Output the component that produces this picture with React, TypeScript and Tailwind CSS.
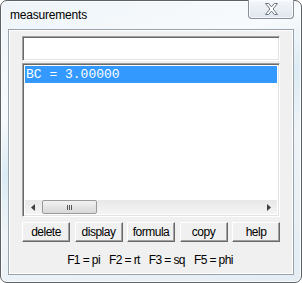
import React from "react";

const sans = { fontFamily: '"Liberation Sans", Arial, sans-serif' } as const;

function Btn({ label }: { label: string }) {
  return (
    <div className="w-[48px] h-[20px] bg-[#f0f0f0] border border-t-white border-l-white border-r-[#696969] border-b-[#696969] shadow-[inset_-1px_-1px_0_#a0a0a0] flex items-center justify-center text-[12px] tracking-[-0.5px] text-black">
      {label}
    </div>
  );
}

export default function App() {
  return (
    <div className="w-[302px] h-[283px] overflow-hidden bg-white" style={sans}>
      <div className="relative w-[302px] h-[283px] rounded-[7px] border border-[#5d6266] bg-[linear-gradient(160deg,#eef4f9_0%,#f8fbfd_30%,#dcebf4_45%,#eef4f8_60%,#e4edf4_100%)] shadow-[inset_0_0_0_1px_#ffffffcc] flex flex-col">
        <div className="h-[28px] flex items-start">
          <div className="pl-[9px] pt-[7px] text-[12px] text-black leading-[14px] tracking-[-0.2px]">measurements</div>
          <div className="ml-auto mr-[7px] w-[46px] h-[19px] mt-[-1px] rounded-b-[4px] border border-[#8a9098] border-t-0 bg-[linear-gradient(#f4f7fa,#dfe6ee)] shadow-[inset_0_0_0_1px_#ffffffaa] flex items-center justify-center">
            <svg width="15" height="12" viewBox="0 0 15 12">
              <path
                d="M1.5 0.5h3.2l2.8 3.4 2.8-3.4h3.2l-4.4 5.5 4.4 5.5h-3.2l-2.8-3.4-2.8 3.4h-3.2l4.4-5.5z"
                fill="#ffffff"
                stroke="#6e7680"
                strokeWidth="1"
                strokeLinejoin="round"
              />
            </svg>
          </div>
        </div>
        <div className="mx-[7px] h-[246px] border border-[#9aa3ac] bg-[#f0f0f0] shadow-[inset_0_0_0_1px_#ffffff] flex flex-col px-[13px] pt-[6px]">
          <div className="h-[25px] bg-white border border-t-[#a0a0a0] border-l-[#a0a0a0] border-r-white border-b-white shadow-[inset_1px_1px_0_#696969,inset_-1px_-1px_0_#e3e3e3]" />
          <div className="mt-[2px] h-[154px] bg-white border border-t-[#a0a0a0] border-l-[#a0a0a0] border-r-white border-b-white shadow-[inset_1px_1px_0_#696969,inset_-1px_-1px_0_#e3e3e3] flex flex-col p-[2px]">
            <div
              className="h-[17px] bg-[#3399ff] text-white text-[13px] leading-[17px] pl-[1px]"
              style={{ fontFamily: '"Liberation Mono", "Courier New", monospace' }}
            >
              BC = 3.00000
            </div>
            <div className="flex-1" />
            <div className="h-[14px] bg-[linear-gradient(#e8e8e8,#f4f4f4)] flex items-center">
              <div className="w-[16px] flex items-center justify-center">
                <svg width="4" height="7" viewBox="0 0 4 7"><path d="M4 0L0 3.5L4 7z" fill="#404040" /></svg>
              </div>
              <div className="ml-[1px] w-[55px] h-[14px] rounded-[2px] border border-[#9a9a9a] bg-[linear-gradient(#f2f2f2,#d8d8d8)] flex items-center justify-center gap-[1px]">
                <div className="w-[1px] h-[5px] bg-[#555]" />
                <div className="w-[1px] h-[5px] bg-[#555]" />
                <div className="w-[1px] h-[5px] bg-[#555]" />
              </div>
              <div className="flex-1" />
              <div className="w-[16px] flex items-center justify-center">
                <svg width="4" height="7" viewBox="0 0 4 7"><path d="M0 0L4 3.5L0 7z" fill="#404040" /></svg>
              </div>
            </div>
          </div>
          <div className="mt-[5px] flex justify-between">
            <Btn label="delete" />
            <Btn label="display" />
            <Btn label="formula" />
            <Btn label="copy" />
            <Btn label="help" />
          </div>
          <div className="mt-[11px] flex justify-center gap-[9px] text-[12px] tracking-[-0.6px] text-black leading-[14px] pr-[2px]">
            <span>F1 = pi</span>
            <span>F2 = rt</span>
            <span>F3 = sq</span>
            <span>F5 = phi</span>
          </div>
        </div>
      </div>
    </div>
  );
}
